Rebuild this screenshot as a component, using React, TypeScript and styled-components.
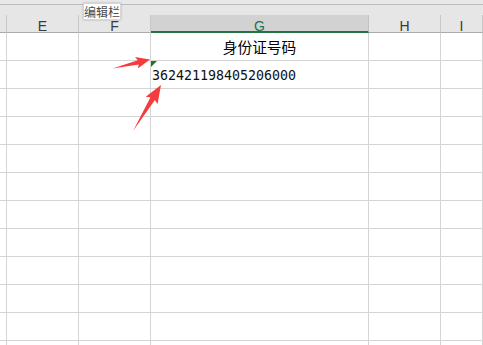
import styled, { createGlobalStyle } from "styled-components";

const GlobalStyle = createGlobalStyle`
  html, body {
    margin: 0;
    padding: 0;
    background: #fff;
  }
  body {
    font-family: "Liberation Sans", "Noto Sans CJK SC", sans-serif;
  }
`;

const COLS = [
  { key: "rh", label: "", width: "7px" },
  { key: "E", label: "E", width: "72px" },
  { key: "F", label: "F", width: "72px" },
  { key: "G", label: "G", width: "218px" },
  { key: "H", label: "H", width: "72px" },
  { key: "I", label: "I", width: "1fr" },
];

const TEMPLATE = COLS.map((c) => c.width).join(" ");
const ROW_COUNT = 12;

// 화살표 다각형 계산 (꼬리 -> 끝)
const arrowPoints = (
  tx: number,
  ty: number,
  px: number,
  py: number,
  head: number,
  wing: number,
  neck: number
) => {
  const dx = px - tx;
  const dy = py - ty;
  const len = Math.hypot(dx, dy);
  const ux = dx / len;
  const uy = dy / len;
  const nx = -uy;
  const ny = ux;
  const at = (a: number, b: number) =>
    `${(tx + ux * a + nx * b).toFixed(1)},${(ty + uy * a + ny * b).toFixed(1)}`;
  return [
    at(0, 0),
    at(len - head + 1, -neck),
    at(len - head - 1, -wing),
    at(len, 0),
    at(len - head - 1, wing),
    at(len - head + 1, neck),
  ].join(" ");
};

const App = () => {
  return (
    <Page>
      <GlobalStyle />
      <TopStrip>
        <Tip>编辑栏</Tip>
      </TopStrip>
      <HeaderBar>
        <HeaderRow>
          {COLS.map((c) => (
            <ColHead key={c.key} $active={c.key === "G"}>
              {c.label}
            </ColHead>
          ))}
        </HeaderRow>
      </HeaderBar>
      <Sheet>
        {Array.from({ length: ROW_COUNT }).map((_, r) => (
          <Row key={r}>
            {COLS.map((c) => (
              <Cell key={c.key} $center={r === 0}>
                {c.key === "G" && r === 0 && <HeadText>身份证号码</HeadText>}
                {c.key === "G" && r === 1 && (
                  <>
                    <ErrorMark />
                    <NumText>362421198405206000</NumText>
                  </>
                )}
              </Cell>
            ))}
          </Row>
        ))}
      </Sheet>
      <Arrows width="483" height="345" viewBox="0 0 483 345">
        <polygon points={arrowPoints(112.5, 68.5, 150, 59.5, 13, 6, 2.2)} />
        <polygon points={arrowPoints(133, 131, 161, 85, 17, 7, 2.6)} />
      </Arrows>
    </Page>
  );
};

export default App;

// 전체 페이지
const Page = styled.div`
  position: relative;
  width: 483px;
  height: 345px;
  overflow: hidden;
  background: #fff;
`;

// 상단 회색 띠
const TopStrip = styled.div`
  height: 4px;
  background: #e8e8e8;
  border-bottom: 1px solid #bdbdbd;
`;

// 편집바 툴팁
const Tip = styled.div`
  position: absolute;
  left: 83px;
  top: 3px;
  width: 38px;
  height: 17px;
  box-sizing: border-box;
  background: #fff;
  border: 1px solid #d6d6d6;
  box-shadow: 0 0 2px rgba(0, 0, 0, 0.25);
  font-family: "Noto Sans CJK SC", sans-serif;
  font-size: 12px;
  line-height: 15px;
  color: #4a4a4a;
  text-align: center;
  white-space: nowrap;
  z-index: 2;
`;

// 열 머리 영역
const HeaderBar = styled.div`
  background: #e6e6e6;
  padding-top: 10px;
`;

const HeaderRow = styled.div`
  display: grid;
  grid-template-columns: ${TEMPLATE};
  height: 18px;
`;

const ColHead = styled.div<{ $active?: boolean }>`
  box-sizing: border-box;
  height: 18px;
  padding-top: 5px;
  line-height: 12px;
  font-size: 14px;
  text-align: center;
  color: ${(p) => (p.$active ? "#217346" : "#3a3a3a")};
  background: ${(p) => (p.$active ? "#d2d2d2" : "transparent")};
  border-right: 1px solid ${(p) => (p.$active ? "#c2c2c2" : "#c8c8c8")};
  border-bottom: ${(p) =>
    p.$active ? "2px solid #217346" : "1px solid #ababab"};
  overflow: visible;
`;

// 시트 본문
const Sheet = styled.div`
  display: flex;
  flex-direction: column;
`;

const Row = styled.div`
  display: grid;
  grid-template-columns: ${TEMPLATE};
  height: 28px;
`;

const Cell = styled.div<{ $center?: boolean }>`
  position: relative;
  box-sizing: border-box;
  display: flex;
  align-items: flex-end;
  justify-content: ${(p) => (p.$center ? "center" : "flex-start")};
  padding: 0 1px 3px 1px;
  border-right: 1px solid #d4d4d4;
  border-bottom: 1px solid #d4d4d4;
  color: #000;
`;

const HeadText = styled.span`
  font-family: "Noto Sans CJK SC", sans-serif;
  font-size: 14.7px;
  line-height: 20px;
`;

const NumText = styled.span`
  font-family: "DejaVu Sans Mono", "Liberation Mono", monospace;
  font-size: 13.3px;
  line-height: 18px;
  color: #111;
`;

// 숫자 저장 텍스트 오류 표시 (녹색 삼각형)
const ErrorMark = styled.span`
  position: absolute;
  left: 0;
  top: 0;
  width: 0;
  height: 0;
  border-top: 6px solid #1f7a1f;
  border-right: 6px solid transparent;
`;

// 빨간 화살표
const Arrows = styled.svg`
  position: absolute;
  left: 0;
  top: 0;
  pointer-events: none;
  fill: #f53c3c;
`;
